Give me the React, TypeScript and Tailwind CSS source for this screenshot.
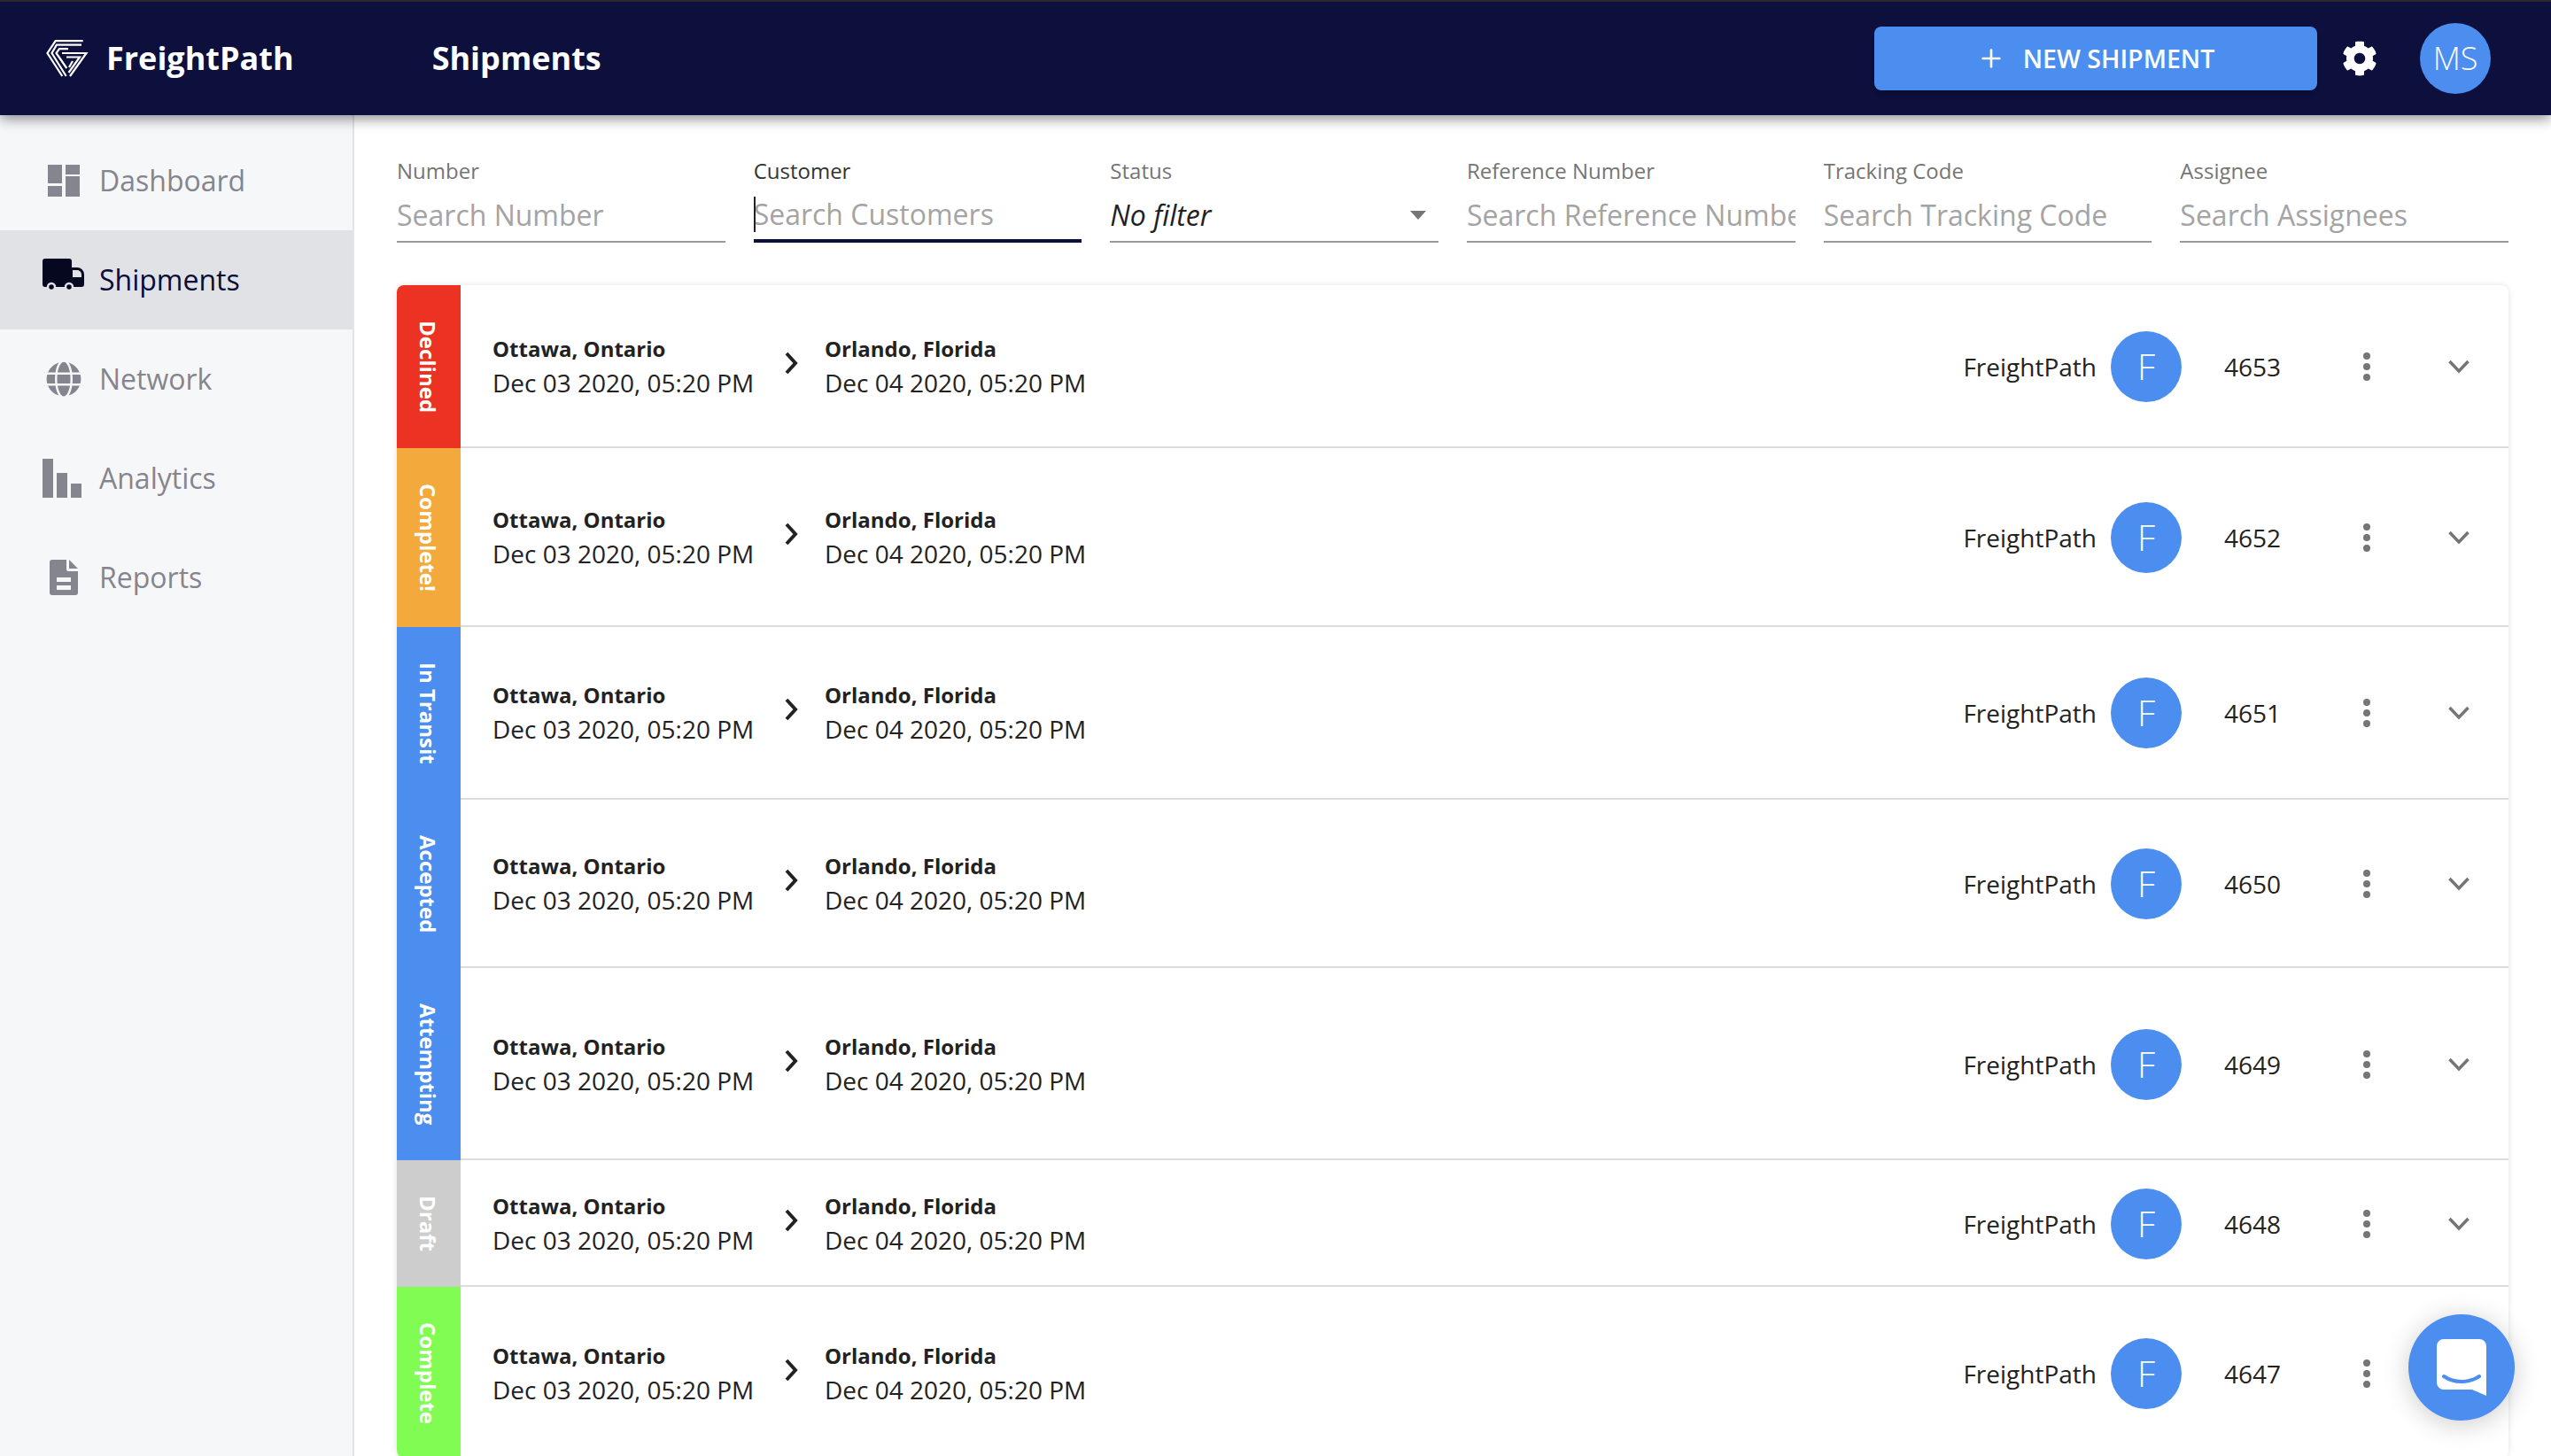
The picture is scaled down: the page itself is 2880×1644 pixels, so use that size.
import React from 'react';
import { FaCog, FaGlobe } from 'react-icons/fa';
import { Plus } from 'lucide-react';

const FILTERS = [
  { label: 'Number', placeholder: 'Search Number' },
  { label: 'Customer', placeholder: 'Search Customers', focused: true },
  { label: 'Status', select: true },
  { label: 'Reference Number', placeholder: 'Search Reference Number' },
  { label: 'Tracking Code', placeholder: 'Search Tracking Code' },
  { label: 'Assignee', placeholder: 'Search Assignees' },
];

const ROWS = [
  { status: 'Declined', color: 'bg-[#ec3323]', id: 4653 },
  { status: 'Complete!', color: 'bg-[#f3a93c]', id: 4652 },
  { status: 'In Transit', color: 'bg-[#4b8eef]', id: 4651 },
  { status: 'Accepted', color: 'bg-[#4b8eef]', id: 4650 },
  { status: 'Attempting', color: 'bg-[#4b8eef]', id: 4649 },
  { status: 'Draft', color: 'bg-[#cdcdcd]', id: 4648 },
  { status: 'Complete', color: 'bg-[#80fc53]', id: 4647, last: true },
];

const Logo = () => (
  <svg width="48" height="42" viewBox="0 0 48 42" fill="none" stroke="white" strokeWidth="2.2">
    <path d="M18.300 41L1.500 15 10.700 1.100H41.700" />
    <path d="M22.700 41L6.500 15 11.900 5.700H40" />
    <path d="M23.300 32L11.500 15 15 10.200H25" />
    <path d="M18 15H45.500L27 41" />
    <path d="M23 19.500H38L25.500 37" />
    <path d="M30 24L26 31" />
  </svg>
);

const DashboardIcon = () => (
  <svg width="36" height="36" viewBox="0 0 36 36" fill="currentColor">
    <rect x="0" y="0" width="16" height="21" />
    <rect x="0" y="24" width="16" height="12" />
    <rect x="20" y="0" width="16" height="11" />
    <rect x="20" y="13" width="16" height="23" />
  </svg>
);

const TruckIcon = () => (
  <svg className="-mt-[10px]" width="48" height="38" viewBox="0 0 48 38" fill="currentColor">
    <path d="M3 0h27a3 3 0 0 1 3 3v7h6a8 8 0 0 1 8 8v11a3 3 0 0 1-3 3H3a3 3 0 0 1-3-3V3a3 3 0 0 1 3-3z" />
    <path d="M34 13h5a5 5 0 0 1 5 5v3H34z" fill="#e1e2e6" />
    <circle cx="10" cy="32" r="4" stroke="#e1e2e6" strokeWidth="2.500" />
    <circle cx="30" cy="32" r="4" stroke="#e1e2e6" strokeWidth="2.500" />
  </svg>
);

const AnalyticsIcon = () => (
  <svg width="44" height="44" viewBox="0 0 44 44" fill="currentColor">
    <rect x="0" y="0" width="12" height="44" />
    <rect x="16" y="16" width="12" height="28" />
    <rect x="32" y="28" width="12" height="16" />
  </svg>
);

const ReportsIcon = () => (
  <svg width="32" height="40" viewBox="0 0 32 40" fill="currentColor">
    <path fillRule="evenodd" d="M3 0h16v11a2 2 0 0 0 2 2h11v24a3 3 0 0 1-3 3H3a3 3 0 0 1-3-3V3a3 3 0 0 1 3-3zM8 20v5h16v-5zM8 29v5h16v-5z" />
    <path d="M22 0l10 10H22z" />
  </svg>
);

const NAV = [
  { label: 'Dashboard', icon: <DashboardIcon />, gap: 'pl-[54px] gap-[22px]' },
  { label: 'Shipments', icon: <TruckIcon />, gap: 'pl-[48px] gap-[16px]', active: true },
  { label: 'Network', icon: <FaGlobe size={40} />, gap: 'pl-[52px] gap-[20px]' },
  { label: 'Analytics', icon: <AnalyticsIcon />, gap: 'pl-[48px] gap-[20px]' },
  { label: 'Reports', icon: <ReportsIcon />, gap: 'pl-[56px] gap-[24px]' },
];

const Sidebar = () => (
  <aside className="w-[400px] shrink-0 bg-[#f6f7f9] border-r-2 border-[#e4e4e6] pt-[18px]">
    {NAV.map((item) => (
      <div
        key={item.label}
        className={`h-[112px] flex items-center text-[32px] ${item.gap} ${item.active ? 'bg-[#e1e2e6] text-[#0a0c38]' : 'text-[#85858f]'}`}
      >
        <span className={`shrink-0 flex ${item.active ? 'text-[#060720]' : ''}`}>{item.icon}</span>
        <span>{item.label}</span>
      </div>
    ))}
  </aside>
);

const Filters = () => (
  <div className="grid grid-cols-6 gap-x-[32px]">
    {FILTERS.map((f) => (
      <label key={f.label} className="block">
        <div className={`text-[24px] leading-[34px] ${f.focused ? 'text-[#333]' : 'text-[#757575]'}`}>{f.label}</div>
        <div className={`relative mt-[8px] h-[56px] flex items-center pb-[4px] border-b-[2px] ${f.focused ? 'border-b-[4px] border-[#0d0f3c]' : 'border-[#999]'}`}>
          {f.select ? (
            <div className="flex w-full items-center justify-between pr-[14px]">
              <span className="text-[32px] italic text-[#222]">No filter</span>
              <svg width="18" height="10" viewBox="0 0 18 10" fill="#757575"><path d="M0 0h18L9 10z" /></svg>
            </div>
          ) : (
            <input
              readOnly
              placeholder={f.placeholder}
              className="w-full bg-transparent text-[32px] outline-none placeholder:text-[#a4a4a4] caret-transparent"
            />
          )}
          {f.focused && <span className="absolute left-0 top-[4px] h-[40px] w-[2px] bg-[#222]" />}
        </div>
      </label>
    ))}
  </div>
);

const Row = ({ status, color, id, last }: { status: string; color: string; id: number; last?: boolean }) => (
  <div className={`flex items-stretch ${last ? '' : 'border-b-2 border-[#dcdcdc]'}`}>
    <div className={`w-[72px] shrink-0 flex justify-center py-[40px] -mb-[2px] ${color}`}>
      <span className="[writing-mode:vertical-rl] text-[24px] font-bold leading-[72px] text-white -ml-[2px]">{status}</span>
    </div>
    <div className="flex flex-1 items-center pt-[2px] pl-[36px] pr-[44px]">
      <div className="w-[336px] shrink-0">
        <div className="text-[24px] leading-[36px] font-bold text-[#222]">Ottawa, Ontario</div>
        <div className="text-[28px] leading-[40px] text-[#222]">Dec 03 2020, 05:20 PM</div>
      </div>
      <svg className="shrink-0 -mt-[8px] mr-[30px] -ml-[7px]" width="16" height="26" viewBox="0 0 16 26" fill="none" stroke="#222" strokeWidth="4">
        <path d="M3 2l10 11L3 24" />
      </svg>
      <div>
        <div className="text-[24px] leading-[36px] font-bold text-[#222]">Orlando, Florida</div>
        <div className="text-[28px] leading-[40px] text-[#222]">Dec 04 2020, 05:20 PM</div>
      </div>
      <div className="ml-auto flex items-center">
        <span className="text-[28px] text-[#222]">FreightPath</span>
        <div className="ml-[16px] flex h-[80px] w-[80px] items-center justify-center rounded-full bg-[#4b8eef] text-[40px] font-light text-white">F</div>
        <span className="ml-[48px] w-[64px] text-[28px] text-[#222]">{id}</span>
        <div className="ml-[93px] flex flex-col gap-[4px]">
          <span className="h-[8px] w-[8px] rounded-full bg-[#757575]" />
          <span className="h-[8px] w-[8px] rounded-full bg-[#757575]" />
          <span className="h-[8px] w-[8px] rounded-full bg-[#757575]" />
        </div>
        <svg className="ml-[88px]" width="24" height="16" viewBox="0 0 24 16" fill="none" stroke="#757575" strokeWidth="3.5">
          <path d="M1.500 2l10.500 11L22.500 2" />
        </svg>
      </div>
    </div>
  </div>
);

export default function App() {
  return (
    <div className="h-[1644px] w-[2880px] overflow-hidden flex flex-col bg-white font-['Open_Sans',sans-serif] relative">
      <header className="relative z-10 h-[130px] shrink-0 flex items-center bg-[#0d0f3c] border-t-2 border-[#2a2a2a] pl-[52px] pr-[68px] shadow-[0_4px_14px_rgba(0,0,0,0.45)]">
        <Logo />
        <span className="ml-[20px] text-[36px] font-bold text-white">FreightPath</span>
        <span className="ml-[156px] text-[36px] font-bold text-white">Shipments</span>
        <button className="ml-auto flex h-[72px] w-[500px] items-center justify-center gap-[20px] rounded-[8px] bg-[#4b8eef] text-[28.500px] font-semibold text-white shadow-md">
          <Plus size={32} strokeWidth={2} />
          NEW SHIPMENT
        </button>
        <FaCog className="ml-[28px] text-white" size={40} />
        <div className="ml-[48px] flex h-[80px] w-[80px] items-center justify-center rounded-full bg-[#4b8eef] text-[36px] font-light text-white">MS</div>
      </header>
      <div className="flex flex-1 min-h-0">
        <Sidebar />
        <main className="flex-1 min-w-0 pl-[48px] pr-[48px] pt-[46px]">
          <Filters />
          <div className="mt-[48px] rounded-[8px] overflow-hidden shadow-[0_0_6px_rgba(0,0,0,0.12)]">
            {ROWS.map((r) => (
              <Row key={r.id} {...r} />
            ))}
          </div>
        </main>
      </div>
      <div className="absolute right-[41px] bottom-[40px] z-20 flex h-[120px] w-[120px] items-center justify-center rounded-full bg-[#4b8eef] shadow-[0_4px_30px_rgba(0,0,0,0.2)]">
        <svg width="56" height="64" viewBox="0 0 56 64" fill="none">
          <path d="M8 0h40a8 8 0 0 1 8 8v56l-16-7H8a8 8 0 0 1-8-8V8a8 8 0 0 1 8-8z" fill="white" />
          <path d="M8 42c12 8 28 8 40 0" stroke="#4b8eef" strokeWidth="4" strokeLinecap="round" />
        </svg>
      </div>
    </div>
  );
}
